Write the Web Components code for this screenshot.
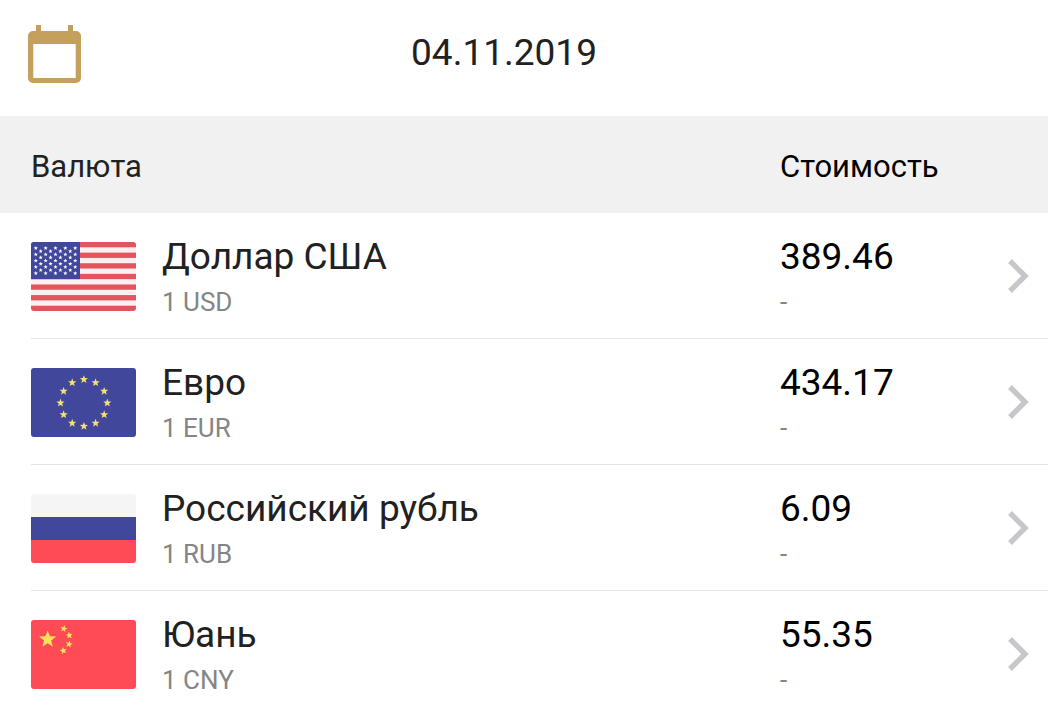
<!DOCTYPE html>
<html lang="ru">
<head>
<meta charset="utf-8">
<meta name="viewport" content="width=device-width, initial-scale=1">
<title>Курсы валют</title>
<style>
body { margin: 0; background: #fff; color: #212121; font-family: Roboto, "Noto Sans", sans-serif; }
</style>
</head>
<body>
<rates-app></rates-app>

<template id="app-template">
  <style>:host { display: block; }</style>
  <date-bar><time datetime="2019-11-04">04.11.2019</time></date-bar>
  <rates-table></rates-table>
</template>

<template id="date-bar-template">
  <style>
    :host { display: flex; align-items: center; box-sizing: border-box; height: 116px; padding: 0 121px 8px 28px; }
    button { display: block; flex: none; padding: 0; border: 0; background: none; cursor: pointer; }
    svg { display: block; }
    .date { flex: 1; text-align: center; font-size: 37px; line-height: 44px; padding-bottom: 2px; }
  </style>
  <button type="button" aria-label="Выбрать дату">
    <svg width="53" height="58" viewBox="0 0 53 58" aria-hidden="true">
      <path fill="#c4a05c" fill-rule="evenodd" d="M8 0h5v6h27V0h5v6h3a5 5 0 0 1 5 5v42a5 5 0 0 1-5 5H5a5 5 0 0 1-5-5V11a5 5 0 0 1 5-5h3zM5.300 19v34h42.400V19z"/>
    </svg>
  </button>
  <div class="date"><slot></slot></div>
</template>

<template id="rates-table-template">
  <style>
    :host { display: block; padding-left: 31px; overflow: hidden; }
    table { width: 100%; border-collapse: separate; border-spacing: 0; table-layout: fixed; }
    .flag-col { width: 131px; }
    .price-col { width: 200px; }
    .open-col { width: 68px; }
    th { height: 97px; box-sizing: border-box; padding: 4px 0 0; background: #f1f1f1; text-align: left; font-weight: 400; font-size: 31px; line-height: 36px; }
    th:first-child { box-shadow: -31px 0 0 #f1f1f1; }
    th.price { color: #000; }
    td { height: 126px; box-sizing: border-box; padding: 0; border-bottom: 1px solid #e4e4e4; vertical-align: middle; }
    td:first-child { padding-top: 2px; }
    tr:last-child td { height: 122px; padding-top: 3px; border-bottom: 0; }
    tr:last-child td:first-child { padding-top: 5px; }
    .main { font-size: 37px; line-height: 44px; }
    .sub { font-size: 26px; line-height: 30px; padding: 8px 0 0; color: #858585; }
    .price .main { color: #000; }
    button { display: block; margin: 0 19px 0 auto; padding: 0; border: 0; background: none; cursor: pointer; }
    svg { display: block; }
  </style>
  <table>
    <colgroup><col class="flag-col"><col><col class="price-col"><col class="open-col"></colgroup>
    <thead><tr><th colspan="2" scope="col">Валюта</th><th class="price" colspan="2" scope="col">Стоимость</th></tr></thead>
    <tbody></tbody>
  </table>
</template>

<script>
const fromTemplate = (host, id) => {
  const root = host.attachShadow({ mode: 'open' });
  root.append(document.getElementById(id).content.cloneNode(true));
  return root;
};

const star = (cx, cy, r, turn = 0) => {
  const points = [];
  for (let i = 0; i < 10; i++) {
    const radius = i % 2 ? r * 0.42 : r;
    const a = (i * 36 - 90 + turn) * Math.PI / 180;
    points.push((cx + radius * Math.cos(a)).toFixed(2) + ',' + (cy + radius * Math.sin(a)).toFixed(2));
  }
  return `<polygon points="${points.join(' ')}"/>`;
};

const flags = {
  USD() {
    let s = '<rect width="105" height="69" fill="#ffeff0"/>';
    for (let i = 0; i < 7; i++) s += `<rect y="${(i * 10.615).toFixed(2)}" width="105" height="5.31" fill="#e2555e"/>`;
    s += '<rect width="49" height="37.15" fill="#41479b"/><g fill="#fff">';
    for (let r = 0; r < 9; r++)
      for (let c = 0; c < (r % 2 ? 4 : 5); c++)
        s += star(4.8 + c * 9.85 + (r % 2 ? 4.9 : 0), 6.1 + r * 3.15, 2.2);
    return s + '</g>';
  },
  EUR() {
    let s = '<rect width="105" height="69" fill="#41479b"/><g fill="#f6e070">';
    for (let i = 0; i < 12; i++) {
      const a = i * Math.PI / 6;
      s += star(52.9 + 23.4 * Math.sin(a), 34.9 - 23.4 * Math.cos(a), 4.3);
    }
    return s + '</g>';
  },
  RUB: () => '<rect width="105" height="69" fill="#f5f5f5"/><rect y="23" width="105" height="23" fill="#41479b"/><rect y="46" width="105" height="23" fill="#ff4b55"/>',
  CNY: () => '<rect width="105" height="69" fill="#ff4b55"/><g fill="#ffe15a">' +
    star(16.6, 19.4, 9) + star(32.8, 8.6, 3.8, 12) + star(38.2, 15.4, 3.8, -8) +
    star(38.1, 24.2, 3.8, 12) + star(32.4, 30.6, 3.8, -12) + '</g>'
};

customElements.define('currency-flag', class extends HTMLElement {
  constructor() {
    super();
    this.attachShadow({ mode: 'open' });
  }
  connectedCallback() {
    this.shadowRoot.innerHTML = `
      <style>
        :host { display: block; width: 105px; height: 69px; border-radius: 3px; overflow: hidden; }
        svg { display: block; }
      </style>
      <svg width="105" height="69" viewBox="0 0 105 69" aria-hidden="true">${flags[this.getAttribute('code')]()}</svg>`;
  }
});

customElements.define('date-bar', class extends HTMLElement {
  constructor() { super(); fromTemplate(this, 'date-bar-template'); }
});

const rates = [
  ['USD', 'Доллар США', '389.46'],
  ['EUR', 'Евро', '434.17'],
  ['RUB', 'Российский рубль', '6.09'],
  ['CNY', 'Юань', '55.35']
];

customElements.define('rates-table', class extends HTMLElement {
  constructor() {
    super();
    const root = fromTemplate(this, 'rates-table-template');
    root.querySelector('tbody').innerHTML = rates.map(([code, name, price]) => `
      <tr>
        <td><currency-flag code="${code}"></currency-flag></td>
        <td><div class="main">${name}</div><div class="sub">1 ${code}</div></td>
        <td class="price"><div class="main">${price}</div><div class="sub">-</div></td>
        <td><button type="button" aria-label="Открыть: ${name}">
          <svg width="21" height="34" viewBox="0 0 21 34" aria-hidden="true"><path d="M2 2l15 15L2 32" fill="none" stroke="#c7c7cb" stroke-width="5.400"/></svg>
        </button></td>
      </tr>`).join('');
  }
});

customElements.define('rates-app', class extends HTMLElement {
  constructor() { super(); fromTemplate(this, 'app-template'); }
});
</script>
</body>
</html>
